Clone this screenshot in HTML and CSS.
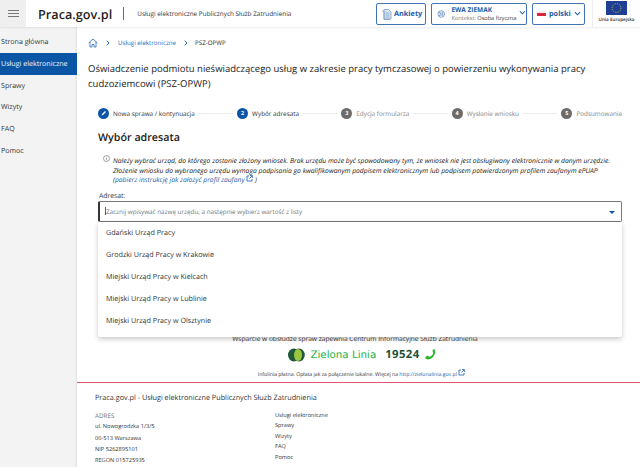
FILE: index.html
```html
<!DOCTYPE html>
<html lang="pl">
<head>
<meta charset="utf-8">
<title>Praca.gov.pl</title>
<link rel="stylesheet" href="styles.css">
</head>
<body>
<header class="top">
  <button class="burger" aria-label="Menu"><span></span><span></span><span></span></button>
  <a class="brand">Praca.gov.pl</a>
  <span class="brand-sep"></span>
  <span class="brand-sub">Usługi elektroniczne Publicznych Służb Zatrudnienia</span>
  <div class="top-actions">
    <button class="tbtn tbtn-ank">
      <svg width="11" height="12" viewBox="0 0 11 12" fill="#dbe6f3" stroke="#7f9fc6" stroke-width=".8"><path d="M3 1.500h4.500L10 4v7H3z"/><path d="M1 3h2v8.500h6" fill="none"/><path d="M4.500 5h4M4.500 7h4M4.500 9h4" fill="none"/></svg>
      <b>Ankiety</b>
    </button>
    <button class="tbtn tbtn-user">
      <svg width="10" height="10" viewBox="0 0 10 10" fill="none" stroke="#6d95c4" stroke-width="1"><circle cx="5" cy="5" r="3.900"/><circle cx="5" cy="5" r="1.500"/><path d="M2 2.500 4 4M8 2.500 6 4M2 7.500 4 6M8 7.500 6 6"/></svg>
      <span class="user-text"><b>EWA ZIEMAK</b><small><i>Kontekst:</i> Osoba fizyczna</small></span>
      <svg class="chev" width="8" height="5" viewBox="0 0 8 5" fill="none" stroke="#1a5ca8" stroke-width="1.200"><path d="M1 1l3 3 3-3"/></svg>
    </button>
    <button class="tbtn tbtn-lang">
      <span class="flag"></span><b>polski</b>
      <svg width="7" height="5" viewBox="0 0 8 5" fill="none" stroke="#1a5ca8" stroke-width="1.200"><path d="M1 1l3 3 3-3"/></svg>
    </button>
  </div>
  <div class="eu">
    <svg width="21" height="14" viewBox="0 0 21 14"><rect width="21" height="14" fill="#1f3f94"/><circle cx="10.500" cy="7" r="4.400" fill="none" stroke="#d8c84a" stroke-width="1" stroke-dasharray=".9 1.400"/></svg>
    <span>Unia Europejska</span>
  </div>
</header>
<div class="layout">
  <nav class="side">
    <a class="side-item">Strona główna</a>
    <a class="side-item active">Usługi elektroniczne</a>
    <a class="side-item">Sprawy</a>
    <a class="side-item">Wizyty</a>
    <a class="side-item">FAQ</a>
    <a class="side-item">Pomoc</a>
  </nav>
  <main class="main">
    <div class="content">
      <div class="crumbs">
        <svg width="10" height="10" viewBox="0 0 10 10" fill="none" stroke="#2a6ab5" stroke-width=".8"><path d="M.6 5 5 1l4.400 4M2 4v5h2V6.500h2V9h2V4"/></svg>
        <svg class="crumb-sep" width="4" height="6" viewBox="0 0 4 6" fill="none" stroke="#2a6ab5"><path d="M.7.7 3 3 .7 5.300"/></svg>
        <a>Usługi elektroniczne</a>
        <svg class="crumb-sep" width="4" height="6" viewBox="0 0 4 6" fill="none" stroke="#2a6ab5"><path d="M.7.7 3 3 .7 5.300"/></svg>
        <span>PSZ-OPWP</span>
      </div>
      <h1>Oświadczenie podmiotu nieświadczącego usług w zakresie pracy tymczasowej o powierzeniu wykonywania pracy cudzoziemcowi (PSZ-OPWP)</h1>
      <ol class="steps">
        <li class="step done"><span class="dot"><svg width="6" height="6" viewBox="0 0 6 6"><path d="M.5 5.500 1 4 4 1l1 1-3 3z" fill="#fff"/></svg></span><span class="label">Nowa sprawa / kontynuacja</span></li>
        <li class="step current"><span class="dot">2</span><span class="label">Wybór adresata</span></li>
        <li class="step"><span class="dot">3</span><span class="label">Edycja formularza</span></li>
        <li class="step"><span class="dot">4</span><span class="label">Wysłanie wniosku</span></li>
        <li class="step last"><span class="dot">5</span><span class="label">Podsumowanie</span></li>
      </ol>
      <h2>Wybór adresata</h2>
      <div class="note">
        <svg class="note-icon" width="7" height="7" viewBox="0 0 7 7" fill="none" stroke="#666" stroke-width=".6"><circle cx="3.500" cy="3.500" r="3"/><path d="M3.500 3v2.200M3.500 1.700v.7"/></svg>
        <p>Należy wybrać urząd, do którego zostanie złożony wniosek. Brak urzędu może być spowodowany tym, że wniosek nie jest obsługiwany elektronicznie w danym urzędzie.<br>Złożenie wniosku do wybranego urzędu wymaga podpisania go kwalifikowanym podpisem elektronicznym lub podpisem potwierdzonym profilem zaufanym ePUAP<br>(<a>pobierz instrukcję jak założyć profil zaufany <svg width="7" height="7" viewBox="0 0 7 7" fill="none" stroke="#1a5ca8" stroke-width=".8"><path d="M3 1H1v5h5V4M4 .6h2.400V3M6.200.8 3.500 3.500"/></svg></a> )</p>
      </div>
      <label class="field-label">Adresat:</label>
      <div class="combo">
        <div class="combo-input">
          <span class="caret"></span><span class="ph">Zacznij wpisywać nazwę urzędu, a następnie wybierz wartość z listy</span>
          <span class="arrow"></span>
        </div>
        <ul class="dropdown">
          <li>Gdański Urząd Pracy</li>
          <li>Grodzki Urząd Pracy w Krakowie</li>
          <li>Miejski Urząd Pracy w Kielcach</li>
          <li>Miejski Urząd Pracy w Lublinie</li>
          <li>Miejski Urząd Pracy w Olsztynie</li>
        </ul>
      </div>
      <p class="support">Wsparcie w obsłudze spraw zapewnia Centrum Informacyjne Służb Zatrudnienia</p>
      <div class="zl">
        <svg width="17" height="14" viewBox="0 0 17 14"><ellipse cx="5.800" cy="7" rx="5.800" ry="6.500" fill="#1f5a3a"/><ellipse cx="11" cy="7" rx="5.800" ry="6.500" fill="#1f5a3a"/><ellipse cx="10" cy="7" rx="4" ry="6" fill="#9cc63f"/></svg>
        <span class="zl-name">Zielona Linia</span>
        <b class="zl-num">19524</b>
        <svg width="13" height="13" viewBox="0 0 13 13"><path d="M1 10c1.500 2 5 2 7.500-.5S12 4 10.500 1L8.500 2l.7 3.500c-.5 1.500-2 3-3.500 3.300L3 7.500z" fill="#2db52d"/></svg>
      </div>
      <p class="paid">Infolinia płatna. Opłata jak za połączenie lokalne. Więcej na <a>http://zielonalinia.gov.pl</a> <svg width="7" height="7" viewBox="0 0 7 7" fill="none" stroke="#1a5ca8" stroke-width=".8"><path d="M3 1H1v5h5V4M4 .6h2.400V3M6.200.8 3.500 3.500"/></svg></p>
    </div>
    <footer class="foot">
      <div class="foot-title">Praca.gov.pl - Usługi elektroniczne Publicznych Służb Zatrudnienia</div>
      <div class="foot-cols">
        <div class="foot-addr">
          <div class="foot-head">ADRES</div>
          <div>ul. Nowogrodzka 1/3/5</div>
          <div>00-513 Warszawa</div>
          <div>NIP 5262895101</div>
          <div>REGON 015725935</div>
        </div>
        <div class="foot-links">
          <a>Usługi elektroniczne</a>
          <a>Sprawy</a>
          <a>Wizyty</a>
          <a>FAQ</a>
          <a>Pomoc</a>
        </div>
      </div>
    </footer>
  </main>
</div>
</body>
</html>
```
FILE: styles.css
```css
* { box-sizing: border-box; }
html, body { margin: 0; height: 467px; overflow: hidden; }
body { font-family: "Open Sans", "Liberation Sans", sans-serif; color: #222; background: #fff; font-size: 8px; text-rendering: geometricPrecision; }
p, h1, h2, ol, ul { margin: 0; padding: 0; list-style: none; }
button { font-family: inherit; background: #fff; padding: 0; cursor: pointer; text-rendering: geometricPrecision; }

.top { height: 27px; display: flex; align-items: center; background: #fff; box-shadow: 0 1px 2px rgba(0,0,0,.08); position: relative; z-index: 2; }
.burger { width: 26px; height: 27px; border: 0; background: #efefef; display: flex; flex-direction: column; align-items: center; justify-content: center; gap: 2px; }
.burger span { width: 11px; height: 1px; background: #777; }
.brand { font-size: 12.700px; font-weight: 600; color: #1f1f1f; margin-left: 12px; }
.brand-sep { width: 1px; height: 13px; background: #d23a4c; margin: 0 13px 0 11px; }
.brand-sub { font-size: 6.400px; color: #333; }
.top-actions { margin-left: auto; display: flex; gap: 5px; }
.tbtn { height: 22px; border: 1px solid #3f73b5; border-radius: 2px; display: flex; align-items: center; color: #1a5ca8; }
.tbtn b { font-weight: 700; }
.tbtn-ank { width: 50px; padding-left: 4px; gap: 2px; font-size: 7.300px; }
.tbtn-user { width: 96px; padding-left: 5px; gap: 3px; }
.user-text { display: flex; flex-direction: column; text-align: left; line-height: 8px; width: 67px; margin-left: 3px; }
.user-text b { font-size: 6.500px; }
.user-text small { font-size: 5.600px; color: #333; white-space: nowrap; }
.user-text i { font-style: normal; color: #777; }
.chev { margin-top: -2px; }
.tbtn-lang { width: 53px; padding-left: 4px; gap: 3px; font-size: 7.300px; }
.flag { width: 9px; height: 5px; background: linear-gradient(#eee 0 45%, #d9283c 45%); }
.eu { width: 48px; margin-left: 7px; height: 27px; border-left: 1px solid #eee; display: flex; flex-direction: column; align-items: center; padding-top: 1px; font-size: 4.600px; font-weight: 600; gap: 2px; color: #333; white-space: nowrap; }

.layout { display: flex; height: 440px; }
.side { width: 77px; flex: none; background: #f3f3f3; box-shadow: inset -2px 0 2px -1px rgba(0,0,0,.08); padding-top: 4px; }
.side-item { display: block; height: 21.800px; line-height: 22.800px; padding-left: 1px; font-size: 7.100px; color: #333; white-space: nowrap; }
.side-item.active { background: #0b55a5; color: #f2f6fb; }

.main { flex: 1; min-width: 0; display: flex; flex-direction: column; }
.content { padding: 0 18px 0 11px; height: 354px; }
.crumbs { display: flex; align-items: center; height: 30px; font-size: 6.200px; padding-top: 1px; color: #333; font-weight: 500; gap: 7px; }
.crumbs a { color: #2a6ab5; margin-left: 1px; }
.crumb-sep { margin-left: 1px; }
h1 { font-size: 9.500px; font-weight: 500; line-height: 15px; color: #1c1c1c; width: 520px; margin-top: 4px; }
.steps { display: flex; align-items: center; margin: 16px 0 0 10px; width: 524px; height: 12px; }
.step { display: flex; align-items: center; flex: 1 1 auto; font-size: 6.350px; color: #888; }
.step::after { content: ""; flex: 1; height: 1px; background: #ececec; margin: 0 4px; }
.step.last { flex: none; }
.step.last::after { display: none; }
.dot { width: 11px; height: 11px; border-radius: 50%; background: #6b6b6b; color: #fff; display: flex; align-items: center; justify-content: center; font-size: 5.500px; font-weight: 700; margin-right: 4px; flex: none; }
.step.done .dot, .step.current .dot { background: #0b55a5; }
.step.done, .step.current { color: #333; }
.step .label { white-space: nowrap; }
h2 { font-size: 10.700px; font-weight: 600; line-height: 18px; margin: 10px 0 0 10px; color: #1b1b1b; }
.note { display: flex; margin: 9px 0 0 25px; position: relative; }
.note-icon { position: absolute; left: -10px; top: -1px; }
.note p { font-size: 6.750px; font-style: italic; line-height: 9.500px; color: #222; white-space: nowrap; }
.note a { color: #1a5ca8; }
.field-label { display: block; margin: 6px 0 0 11px; font-size: 6.800px; line-height: 10px; color: #333; }
.combo { position: relative; margin-left: 10px; width: 524px; }
.combo-input { height: 21px; border: 1px solid #777; border-left: 2px solid #333; border-radius: 2px; display: flex; align-items: center; padding-left: 5px; position: relative; }
.caret { width: 1px; height: 8px; background: #3b63c4; }
.ph { font-size: 6.300px; color: #777; }
.arrow { position: absolute; right: 6px; top: 9px; border: 3px solid transparent; border-top-color: #0b55a5; border-bottom: 0; }
.dropdown { position: absolute; left: 0; right: 0; top: 21px; height: 115px; background: #fff; box-shadow: 0 2px 5px rgba(0,0,0,.22); border-radius: 0 0 2px 2px; z-index: 3; }
.dropdown li { height: 22px; line-height: 22px; padding-left: 8px; font-size: 7.200px; color: #333; }
.support { margin-top: 112px; font-size: 6.600px; text-align: center; color: #333; line-height: 10px; }
.zl { display: flex; align-items: center; justify-content: center; gap: 4px; height: 16px; margin: 3px 0 0 15px; }
.zl-name { color: #23b14d; margin-left: 1px; font-family: "DejaVu Sans", sans-serif; font-size: 10.300px; }
.zl-num { font-size: 11.300px; color: #1c5236; font-weight: 700; margin-left: 5px; letter-spacing: .4px; }
.paid { font-size: 5.150px; text-align: center; margin-top: 6px; color: #333; padding-left: 13px; }
.paid a { color: #1a5ca8; }
.foot { border-top: 1px solid #e8546c; padding: 9px 0 0 18px; margin-top: 1px; flex: 1; }
.foot-title { font-size: 7.250px; color: #333; line-height: 12px; }
.foot-cols { display: flex; margin-top: 6px; font-size: 5.650px; color: #333; }
.foot-addr { width: 180px; line-height: 11.300px; }
.foot-head { color: #777; font-size: 6.300px; }
.foot-links { display: flex; flex-direction: column; line-height: 10.400px; }
```
